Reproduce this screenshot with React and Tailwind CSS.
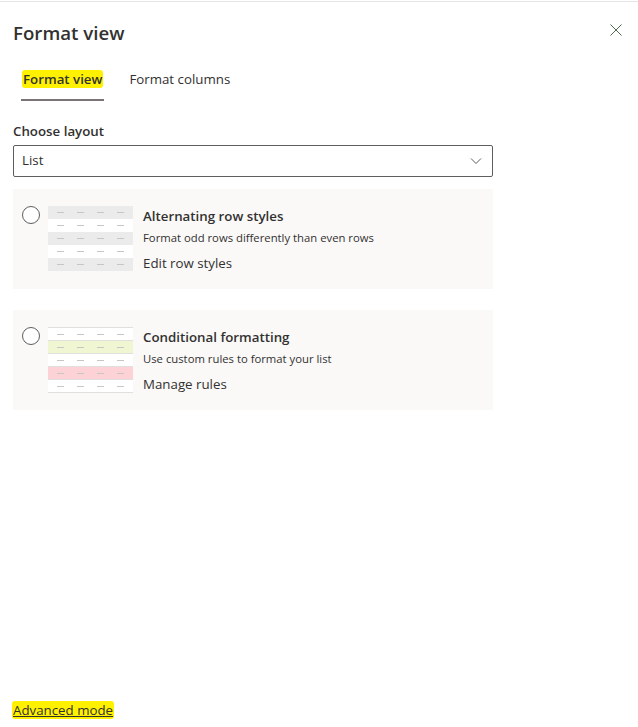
import React from "react";

const font = { fontFamily: '"Segoe UI", "Open Sans", "Noto Sans", sans-serif' };

function Radio() {
  return <div className="w-[18px] h-[18px] rounded-full border border-[#605e5c] bg-white shrink-0" />;
}

function Dashes() {
  return (
    <div className="flex justify-around items-center h-full px-[3px]">
      {[0, 1, 2, 3].map((i) => (
        <div key={i} className="w-[7px] h-px bg-[#c8c6c4]" />
      ))}
    </div>
  );
}

function Thumb({ rows, lines }) {
  return (
    <div className="w-[85px] flex flex-col shrink-0">
      {rows.map((c, i) => (
        <div key={i} className={`h-[13px] ${c} ${lines ? "border-t border-[#e1dfdd]" : ""}`}>
          <Dashes />
        </div>
      ))}
      {lines && <div className="h-px bg-[#e1dfdd]" />}
    </div>
  );
}

function Card({ rows, lines, title, desc, link }) {
  return (
    <div className="bg-[#faf9f8] h-[100px] flex items-start pt-[17px] pl-[9px]">
      <Radio />
      <div className="ml-[8px]">
        <Thumb rows={rows} lines={lines} />
      </div>
      <div className="ml-[10px] flex flex-col">
        <div className="text-[13.3px] leading-[20px] font-semibold text-[#323130]">{title}</div>
        <div className="text-[11.3px] leading-[16px] text-[#323130] mt-[4px]">{desc}</div>
        <div className="text-[13.3px] leading-[20px] text-[#323130] mt-[7px]">{link}</div>
      </div>
    </div>
  );
}

export default function App() {
  return (
    <div style={font} className="w-[638px] h-[727px] bg-white relative text-[#323130] flex flex-col">
      <div className="h-px bg-[#e5e5e5] mt-px" />
      <div className="flex items-start justify-between px-[13px] pt-[17px]">
        <div className="text-[18.7px] leading-[28px] font-semibold">Format view</div>
        <svg width="12" height="12" viewBox="0 0 12 12" className="mt-[5px] mr-[3px]">
          <path d="M0.5 0.5 L11.5 11.5 M11.5 0.5 L0.5 11.5" stroke="#4f6b4f" strokeWidth="1" />
        </svg>
      </div>
      <div className="flex pl-[21px] mt-[22px] gap-[25px]">
        <div className="flex flex-col">
          <div className="text-[13.3px] leading-[20px] font-semibold px-[2px]">
            <span className="bg-[#fff100] rounded-[3px] px-[1px] -mx-[1px]">Format view</span>
          </div>
          <div className="h-[2px] bg-[#7a7574] mt-[10px]" />
        </div>
        <div className="text-[13.3px] leading-[20px]">Format columns</div>
      </div>
      <div className="px-[13px] mt-[20px] text-[13.3px] leading-[20px] font-semibold">Choose layout</div>
      <div className="mx-[13px] w-[480px] mt-[4px] h-[32px] border border-[#605e5c] rounded-[2px] flex items-center justify-between pl-[8px] pr-[10px]">
        <span className="text-[13.3px]">List</span>
        <svg width="12" height="8" viewBox="0 0 12 8">
          <path d="M1 1.5 L6 6.5 L11 1.5" fill="none" stroke="#605e5c" strokeWidth="1" />
        </svg>
      </div>
      <div className="mx-[13px] w-[480px] mt-[12px] flex flex-col gap-[21px]">
        <Card
          rows={["bg-[#ebebeb]", "bg-white", "bg-[#ebebeb]", "bg-white", "bg-[#ebebeb]"]}
          title="Alternating row styles"
          desc="Format odd rows differently than even rows"
          link="Edit row styles"
        />
        <Card
          rows={["bg-white", "bg-[#f1f6d2]", "bg-white", "bg-[#fdd2d6]", "bg-white"]}
          lines
          title="Conditional formatting"
          desc="Use custom rules to format your list"
          link="Manage rules"
        />
      </div>
      <div className="mt-auto mb-[7px] px-[13px] text-[13.3px] leading-[20px]">
        <span className="bg-[#fff100] underline px-[1px] -mx-[1px] rounded-[3px]">Advanced mode</span>
      </div>
    </div>
  );
}
